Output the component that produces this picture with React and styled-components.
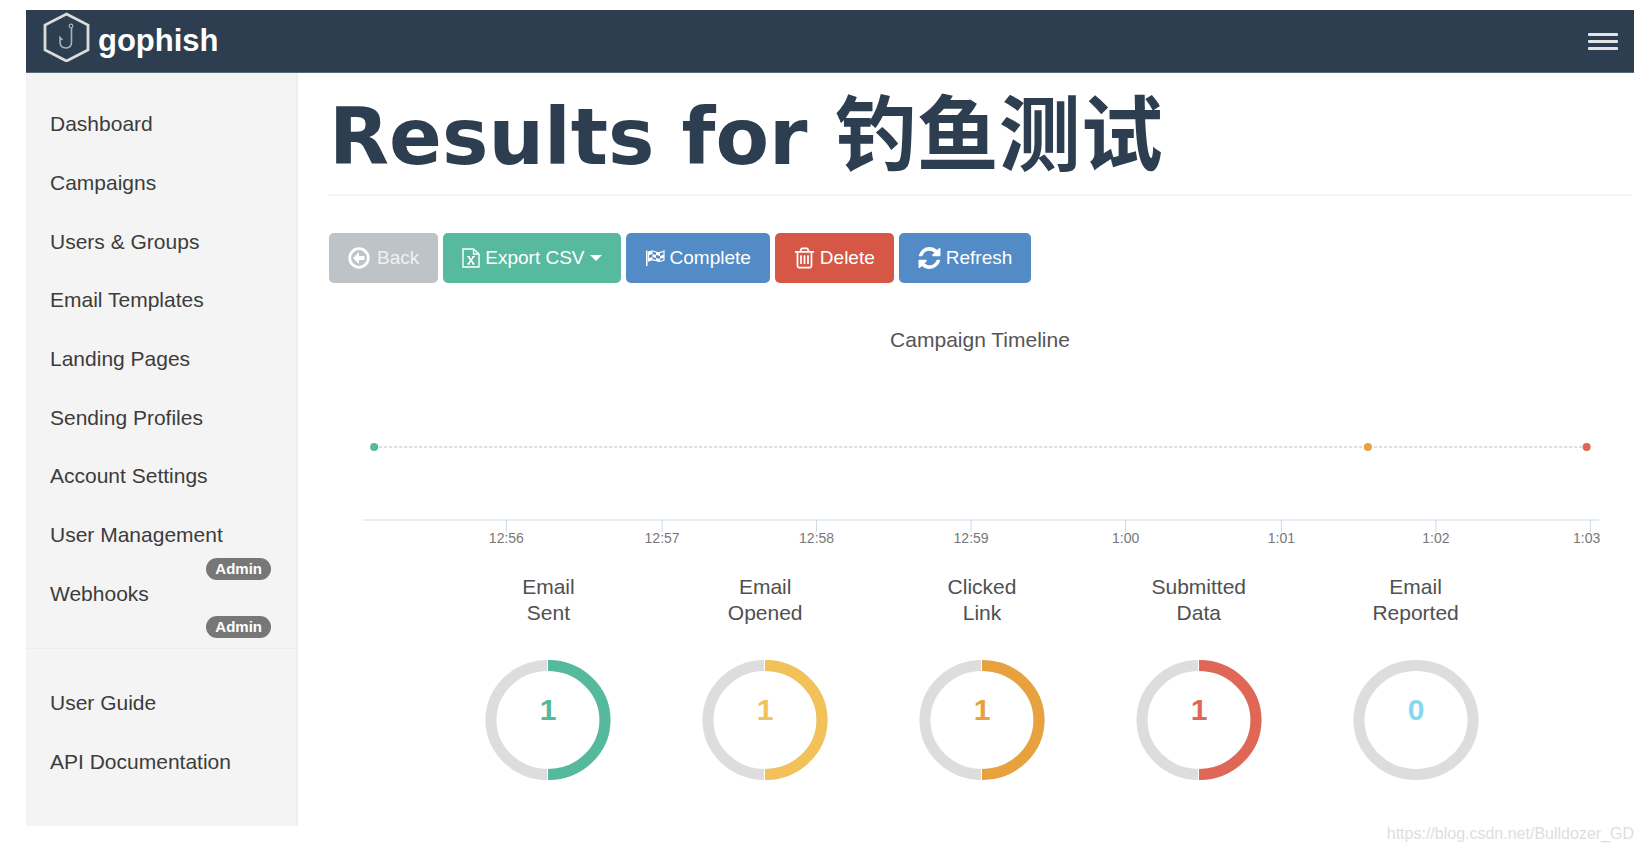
import React from 'react';
import styled, { createGlobalStyle } from 'styled-components';

const Global = createGlobalStyle`
  * { box-sizing: border-box; }
  body {
    margin: 0;
    background: #fff;
    color: #444;
    font-family: "Liberation Sans", Arial, sans-serif;
    font-size: 21px;
    line-height: 26px;
  }
`;

const Page = styled.div`
  display: flex;
  flex-direction: column;
  min-height: 100vh;
  padding: 10px 8px 0 26px;
`;

const Header = styled.header`
  display: flex;
  align-items: center;
  justify-content: space-between;
  height: 63px;
  padding: 0 16px 0 17px;
  background: #2c3e50;
  border-bottom: 1px solid #5a6876;
`;

const Brand = styled.a`
  display: flex;
  align-items: flex-start;
  gap: 8px;
  height: 62px;
  color: #fff;
  font-size: 31px;
  font-weight: 700;
  line-height: 62px;
  text-decoration: none;
`;

const MenuButton = styled.button`
  display: flex;
  flex-direction: column;
  gap: 4px;
  padding: 0;
  border: 0;
  background: none;
`;

const MenuBar = styled.span`
  width: 30px;
  height: 3px;
  border-radius: 1px;
  background: #e2e4e6;
`;

const Body = styled.div`
  display: flex;
  flex: 1;
`;

const Sidebar = styled.nav`
  flex: 0 0 272px;
  padding-top: 22px;
  background: #f4f4f4;
  border-right: 2px solid #efefef;
`;

const NavList = styled.ul`
  display: grid;
  grid-auto-rows: 1fr;
  min-height: ${(p) => p.$height}px;
  margin: 0;
  padding: 0;
  list-style: none;
`;

const NavItem = styled.li`
  position: relative;
  display: flex;
  align-items: center;
  padding-left: 24px;
`;

const NavLink = styled.a`
  color: #3c3c3c;
  text-decoration: none;
`;

const Badge = styled.span`
  position: absolute;
  top: 52px;
  right: 25px;
  padding: 0 9px;
  border-radius: 11px;
  background: #777;
  color: #fff;
  font-size: 15px;
  font-weight: 700;
  line-height: 22px;
`;

const NavDivider = styled.hr`
  height: 1px;
  margin: 25px 0;
  border: 0;
  background: #ececec;
`;

const Main = styled.main`
  flex: 1;
  min-width: 0;
  padding: 0 3px 0 31px;
`;

const Title = styled.h1`
  margin: 0 0 37px;
  padding: 13px 0 14px;
  border-bottom: 2px solid #f1f4f9;
  color: #2c3e50;
  font-family: "DejaVu Sans", sans-serif;
  font-size: 78px;
  font-weight: 700;
  line-height: 85px;
`;

const CampaignName = styled.span`
  font-family: "Noto Sans CJK SC", sans-serif;
  font-size: 82px;
`;

const Toolbar = styled.div`
  display: flex;
  gap: 5px;
`;

const Button = styled.button`
  display: flex;
  align-items: center;
  gap: 5px;
  height: 50px;
  padding: 0 19px;
  border: 0;
  border-radius: 5px;
  background: ${(p) => p.$color};
  color: ${(p) => p.$text || '#fff'};
  font-family: inherit;
  font-size: 19px;
`;

const Caret = styled.span`
  border: 6px solid transparent;
  border-top-color: #fff;
  border-bottom: 0;
`;

const ChartTitle = styled.h2`
  margin: 44px 0 0;
  color: #555;
  font-size: 21px;
  font-weight: 400;
  line-height: 26px;
  text-align: center;
`;

const Timeline = styled.svg`
  display: block;
  width: calc(100% - 66px);
  height: 196px;
  margin: 0 32px 0 34px;
  overflow: visible;
`;

const Stats = styled.div`
  display: grid;
  grid-template-columns: repeat(5, 1fr);
  margin: 25px 107px 0 111px;
`;

const Stat = styled.section`
  display: flex;
  flex-direction: column;
  align-items: center;
  gap: 34px;
`;

const StatName = styled.h3`
  width: 100px;
  margin: 0;
  color: #505050;
  font-size: 21px;
  font-weight: 400;
  line-height: 26px;
  text-align: center;
`;

const Footer = styled.footer`
  height: 24px;
  color: #dedede;
  font-size: 16px;
  line-height: 16px;
  text-align: right;
`;

const Logo = () => (
  <svg width="47" height="52" viewBox="0 0 47 52" fill="none">
    <path d="M23.500 4L45 15V40L23.500 51L2 40V15Z" stroke="#dcdcdc" strokeWidth="2.800" />
    <circle cx="28" cy="16" r="1.800" stroke="#a9b2ba" strokeWidth="1.200" />
    <path d="M28.500 18V32Q28.500 38 23 38Q17 38 17 32V27.500L19.500 30" stroke="#a9b2ba" strokeWidth="1.600" />
  </svg>
);

const BackIcon = () => (
  <svg width="24" height="22" viewBox="0 0 24 22" fill="none">
    <circle cx="11" cy="11" r="9.300" stroke="#fff" strokeWidth="2.800" />
    <path d="M5 11L11 5V9H16.500V13H11V17Z" fill="#fff" />
  </svg>
);

const ExcelIcon = () => (
  <svg width="18" height="20" viewBox="0 0 18 20" fill="none" stroke="#fff" strokeWidth="1.400">
    <path d="M1 1H11.500L17 6V19H1Z" />
    <path d="M11.500 1V6H17" />
    <path d="M5 8.500H8M10 8.500H13M5 16H8M10 16H13" strokeWidth="1.200" />
    <path d="M6.300 8.500L11.700 16M11.700 8.500L6.300 16" strokeWidth="1.600" />
  </svg>
);

const FlagIcon = () => (
  <svg width="20" height="18" viewBox="0 0 20 18" fill="#fff">
    <path d="M1 1.500H2.500V17H1Z" />
    <path d="M3.500 3Q7 1 11 3Q15 4.500 19 2V11Q15 13.500 11 11.500Q7 10 3.500 12Z" fill="none" stroke="#fff" strokeWidth="1.200" />
    <path d="M4 3L7.500 2V5L11 6V3L15 4V7L19 5.500V8.500L15 10V7L11 6V9L7.500 8V5L4 6ZM4 9L7.500 8V10.500L4 11.500ZM11 9L15 10V12.500L11 11.500Z" />
  </svg>
);

const TrashIcon = () => (
  <svg width="21" height="24" viewBox="128 80 1536 1650" fill="#fff">
    <path d="M704 736v576q0 14-9 23t-23 9h-64q-14 0-23-9t-9-23v-576q0-14 9-23t23-9h64q14 0 23 9t9 23zm256 0v576q0 14-9 23t-23 9h-64q-14 0-23-9t-9-23v-576q0-14 9-23t23-9h64q14 0 23 9t9 23zm256 0v576q0 14-9 23t-23 9h-64q-14 0-23-9t-9-23v-576q0-14 9-23t23-9h64q14 0 23 9t9 23zm128 724v-948h-896v948q0 22 7 40.500t14.500 27 10.500 8.500h832q3 0 10.500-8.500t14.500-27 7-40.500zm-672-1076h448l-48-117q-7-9-17-11h-317q-10 2-17 11zm928 32v64q0 14-9 23t-23 9h-96v948q0 83-47 143.500t-113 60.500h-832q-66 0-113-58.500t-47-141.500v-952h-96q-14 0-23-9t-9-23v-64q0-14 9-23t23-9h309l70-167q15-37 54-63t79-26h320q40 0 79 26t54 63l70 167h309q14 0 23 9t9 23z" />
  </svg>
);

const RefreshIcon = () => (
  <svg width="23" height="22" viewBox="128 128 1536 1536" fill="#fff">
    <path d="M1639 1056q0 5-1 7-64 268-268 434.500t-478 166.500q-146 0-282.500-55t-243.500-157l-129 129q-19 19-45 19t-45-19-19-45v-448q0-26 19-45t45-19h448q26 0 45 19t19 45-19 45l-137 137q71 66 161 102t187 36q134 0 250-65t186-179q11-17 53-117 8-23 30-23h192q13 0 22.500 9.500t9.500 22.500zm25-800v448q0 26-19 45t-45 19h-448q-26 0-45-19t-19-45 19-45l138-138q-148-137-349-137-134 0-250 65t-186 179q-11 17-53 117-8 23-30 23h-199q-13 0-22.500-9.500t-9.500-22.500v-7q65-268 270-434.500t480-166.500q146 0 284 55.500t245 156.500l130-129q19-19 45-19t45 19 19 45z" />
  </svg>
);

const Ring = ({ color, value }) => (
  <svg width="126" height="120" viewBox="0 0 126 120">
    <ellipse cx="63" cy="60" rx="57" ry="54.500" fill="none" stroke="#ddd" strokeWidth="11" />
    {value > 0 && (
      <>
        <path d="M63 5.500A57 54.500 0 0 1 63 114.500" fill="none" stroke={color} strokeWidth="11" />
        <path d="M62.500 0V12M62.500 108V120" stroke="#fff" />
      </>
    )}
    <text x="63" y="60" textAnchor="middle" fill={color} fontSize="30" fontWeight="700">
      {value}
    </text>
  </svg>
);

const mainLinks = [
  ['Dashboard'],
  ['Campaigns'],
  ['Users & Groups'],
  ['Email Templates'],
  ['Landing Pages'],
  ['Sending Profiles'],
  ['Account Settings'],
  ['User Management', 'Admin'],
  ['Webhooks', 'Admin'],
];
const helpLinks = [['User Guide'], ['API Documentation']];

const ticks = [
  ['12:56', 11.6],
  ['12:57', 24.2],
  ['12:58', 36.7],
  ['12:59', 49.2],
  ['1:00', 61.7],
  ['1:01', 74.3],
  ['1:02', 86.8],
  ['1:03', 99.3],
];

const events = [
  [0.9, '#54b99d'],
  [81.3, '#e7a13d'],
  [99, '#e06656'],
];

const stats = [
  ['Email Sent', 1, '#54b99d'],
  ['Email Opened', 1, '#f3c159'],
  ['Clicked Link', 1, '#e7a13d'],
  ['Submitted Data', 1, '#e06656'],
  ['Email Reported', 0, '#85d9ee'],
];

const Links = ({ items, height }) => (
  <NavList $height={height}>
    {items.map(([label, badge]) => (
      <NavItem key={label}>
        <NavLink href="#">{label}</NavLink>
        {badge && <Badge>{badge}</Badge>}
      </NavItem>
    ))}
  </NavList>
);

export default function App() {
  return (
    <>
      <Global />
      <Page>
        <Header>
          <Brand href="#">
            <Logo />
            gophish
          </Brand>
          <MenuButton aria-label="Menu">
            <MenuBar />
            <MenuBar />
            <MenuBar />
          </MenuButton>
        </Header>
        <Body>
          <Sidebar>
            <Links items={mainLinks} height={528} />
            <NavDivider />
            <Links items={helpLinks} height={117} />
          </Sidebar>
          <Main>
            <Title>
              Results for <CampaignName lang="zh">钓鱼测试</CampaignName>
            </Title>
            <Toolbar>
              <Button $color="#bdc3c7" $text="#eff1f2"><BackIcon />Back</Button>
              <Button $color="#57b99e"><ExcelIcon />Export CSV<Caret /></Button>
              <Button $color="#528bc5"><FlagIcon />Complete</Button>
              <Button $color="#d65745"><TrashIcon />Delete</Button>
              <Button $color="#528bc5"><RefreshIcon />Refresh</Button>
            </Toolbar>
            <ChartTitle>Campaign Timeline</ChartTitle>
            <Timeline role="img" aria-label="Campaign Timeline">
              <line x1="0.9%" x2="99%" y1="94" y2="94" stroke="#dedede" strokeWidth="2" strokeDasharray="3 2" />
              {events.map(([x, color]) => (
                <circle key={color} cx={`${x}%`} cy="94" r="4" fill={color} />
              ))}
              <line x1="0" x2="100%" y1="167" y2="167" stroke="#e4ecf5" strokeWidth="2" />
              {ticks.map(([label, x]) => (
                <g key={label}>
                  <line x1={`${x}%`} x2={`${x}%`} y1="167" y2="179" stroke="#ccd6eb" />
                  <text x={`${label === '1:03' ? 99 : x}%`} y="190" textAnchor="middle" fontSize="14" fill="#777">
                    {label}
                  </text>
                </g>
              ))}
            </Timeline>
            <Stats>
              {stats.map(([name, value, color]) => (
                <Stat key={name}>
                  <StatName>{name.split(' ')[0]}<br />{name.split(' ')[1]}</StatName>
                  <Ring color={color} value={value} />
                </Stat>
              ))}
            </Stats>
          </Main>
        </Body>
        <Footer>https://blog.csdn.net/Bulldozer_GD</Footer>
      </Page>
    </>
  );
}
